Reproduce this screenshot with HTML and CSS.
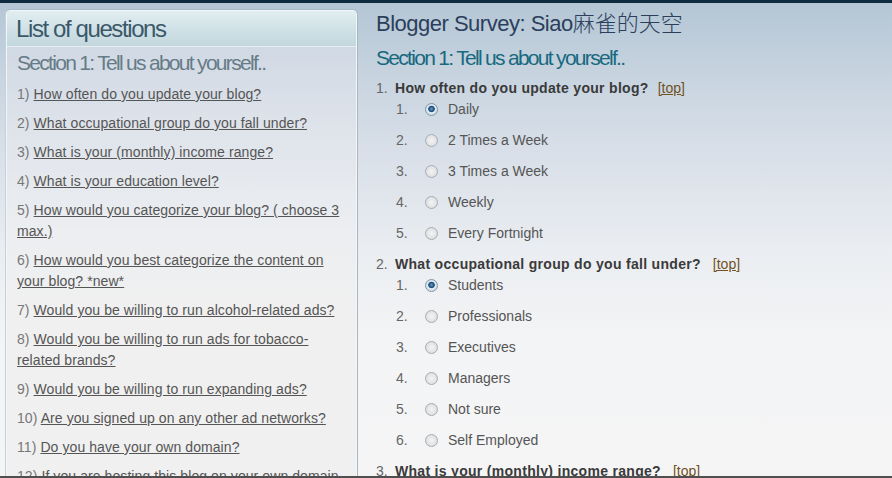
FILE: index.html
```html
<!DOCTYPE html>
<html lang="en">
<head>
<meta charset="utf-8">
<title>Blogger Survey</title>
<link rel="stylesheet" href="styles.css">
</head>
<body>
<div class="frame">
  <div class="topbar"></div>
  <div class="layout">
    <aside class="toc">
      <h2 class="toc-head">List of questions</h2>
      <div class="toc-body">
        <h3 class="toc-section">Section 1: Tell us about yourself..</h3>
        <ul class="toc-list">
          <li>1) <a href="#q1">How often do you update your blog?</a></li>
          <li>2) <a href="#q2">What occupational group do you fall under?</a></li>
          <li>3) <a href="#q3">What is your (monthly) income range?</a></li>
          <li>4) <a href="#q4">What is your education level?</a></li>
          <li>5) <a href="#q5">How would you categorize your blog? ( choose 3 max.)</a></li>
          <li>6) <a href="#q6">How would you best categorize the content on your blog? *new*</a></li>
          <li>7) <a href="#q7">Would you be willing to run alcohol-related ads?</a></li>
          <li>8) <a href="#q8">Would you be willing to run ads for tobacco-related brands?</a></li>
          <li>9) <a href="#q9">Would you be willing to run expanding ads?</a></li>
          <li>10) <a href="#q10">Are you signed up on any other ad networks?</a></li>
          <li>11) <a href="#q11">Do you have your own domain?</a></li>
          <li>12) <a href="#q12">If you are hosting this blog on your own domain, what is it?</a></li>
        </ul>
      </div>
    </aside>
    <main class="survey">
      <h1 class="title">Blogger Survey: Siao<span class="cjk">麻雀的天空</span></h1>
      <h2 class="section">Section 1: Tell us about yourself..</h2>
      <ol class="questions">
        <li id="q1">
          <div class="qline"><span class="qtext">How often do you update your blog?</span><a class="top" href="#">[top]</a></div>
          <ol class="opts">
            <li><label><input type="radio" name="a1" checked><span>Daily</span></label></li>
            <li><label><input type="radio" name="a1"><span>2 Times a Week</span></label></li>
            <li><label><input type="radio" name="a1"><span>3 Times a Week</span></label></li>
            <li><label><input type="radio" name="a1"><span>Weekly</span></label></li>
            <li><label><input type="radio" name="a1"><span>Every Fortnight</span></label></li>
          </ol>
        </li>
        <li id="q2">
          <div class="qline"><span class="qtext">What occupational group do you fall under?</span><a class="top wide" href="#">[top]</a></div>
          <ol class="opts">
            <li><label><input type="radio" name="a2" checked><span>Students</span></label></li>
            <li><label><input type="radio" name="a2"><span>Professionals</span></label></li>
            <li><label><input type="radio" name="a2"><span>Executives</span></label></li>
            <li><label><input type="radio" name="a2"><span>Managers</span></label></li>
            <li><label><input type="radio" name="a2"><span>Not sure</span></label></li>
            <li><label><input type="radio" name="a2"><span>Self Employed</span></label></li>
          </ol>
        </li>
        <li id="q3">
          <div class="qline"><span class="qtext">What is your (monthly) income range?</span><a class="top wide" href="#">[top]</a></div>
          <ol class="opts">
            <li><label><input type="radio" name="a3"><span>Below $1000</span></label></li>
          </ol>
        </li>
      </ol>
    </main>
  </div>
</div>
</body>
</html>
```

FILE: styles.css
```css
* { box-sizing: border-box; }

html, body {
  margin: 0;
  padding: 0;
}

body {
  font-family: "Liberation Sans", Arial, "Noto Sans CJK SC", sans-serif;
  background: #f4f4f5;
}

.frame {
  height: 478px;
  overflow: hidden;
  border-bottom: 2px solid #4f4f4f;
  background: linear-gradient(to bottom, #b3c5d4 0, #c6d3df 70px, #d8dfe8 150px, #eaedf1 250px, #f3f4f5 340px, #f5f5f6 478px);
}

.topbar {
  height: 3px;
  background: #0f2b40;
}

.layout {
  display: flex;
  align-items: flex-start;
}

/* left table of contents */
.toc {
  width: 351px;
  margin: 7px 0 0 6px;
  flex: none;
  border: 1px solid #f2f6f8;
  border-radius: 4px 4px 0 0;
  box-shadow: 1px 0 0 #aab7c2, -1px 0 0 #c4d1db, 0 -1px 0 #a8b9c7;
  background: linear-gradient(to bottom, #d1d9e4 40px, #dfe4eb 120px, #eceef1 220px, #f0f0f0 300px);
  height: 520px;
}

.toc-head {
  margin: 0;
  height: 36px;
  padding: 3px 0 0 9px;
  font-size: 24px;
  line-height: 30px;
  font-weight: normal;
  letter-spacing: -1.4px;
  color: #3b5869;
  border-radius: 3px 3px 0 0;
  background: linear-gradient(to bottom, #e2eef1 0, #d2e3e8 45%, #c2d7dd 100%);
  border-bottom: 1px solid #e6eef1;
}

.toc-body {
  padding: 3px 11px 0 10px;
}

.toc-section {
  margin: 0;
  font-size: 21px;
  line-height: 26px;
  font-weight: normal;
  letter-spacing: -1.7px;
  color: #667b87;
}

.toc-list {
  list-style: none;
  margin: 8px 0 0;
  padding: 0;
  font-size: 14px;
  line-height: 21px;
  letter-spacing: 0.08px;
  color: #777;
}

.toc-list li + li {
  margin-top: 8px;
}

.toc-list a {
  color: #555;
  text-decoration: underline;
}

/* right survey */
.survey {
  flex: 1;
  padding-left: 19px;
}

.title {
  margin: 5px 0 0;
  font-size: 22px;
  line-height: 26px;
  font-weight: normal;
  letter-spacing: -0.5px;
  color: #2b3f5c;
}

.title .cjk {
  font-family: "Noto Sans CJK SC", sans-serif;
  font-weight: 300;
  letter-spacing: 0;
}

.section {
  margin: 8px 0 0;
  font-size: 21px;
  line-height: 26px;
  font-weight: normal;
  letter-spacing: -1.7px;
  color: #17697f;
}

.questions {
  list-style: none;
  counter-reset: q;
  margin: 7px 0 0;
  padding: 0;
  font-size: 14px;
  line-height: 21px;
}

.questions > li {
  counter-increment: q;
  margin-bottom: 10px;
}

.qline {
  display: flex;
  align-items: baseline;
}

.qline::before {
  content: counter(q) ".";
  width: 19px;
  flex: none;
  color: #666;
}

.qtext {
  font-weight: bold;
  letter-spacing: 0.3px;
  color: #3a3a3a;
}

.top {
  margin-left: 9px;
  color: #70511f;
  text-decoration: underline;
}

.top.wide {
  margin-left: 12px;
}

.opts {
  list-style: none;
  counter-reset: o;
  margin: 0;
  padding: 0 0 0 20px;
  color: #555;
}

.opts li {
  counter-increment: o;
  display: flex;
  align-items: center;
  height: 21px;
}

.opts li + li {
  margin-top: 10px;
}

.opts li::before {
  content: counter(o) ".";
  width: 29px;
  flex: none;
  color: #666;
}

.opts label {
  display: flex;
  align-items: center;
}

.opts input {
  -webkit-appearance: none;
  appearance: none;
  width: 13px;
  height: 13px;
  margin: 0 10px 0 0;
  border-radius: 50%;
  border: 1px solid #a7adb2;
  background: radial-gradient(circle at 50% 50%, #f4f4f4 0, #e2e3e4 60%, #d4d6d8 100%);
  flex: none;
}

.opts input:checked {
  border-color: #7d97ad;
  background: radial-gradient(circle at 50% 45%, #6d9cc4 0, #1f4f7d 2.5px, #2f5f8a 3px, #dfe9f1 3.6px, #c6d5e1 100%);
}
```
